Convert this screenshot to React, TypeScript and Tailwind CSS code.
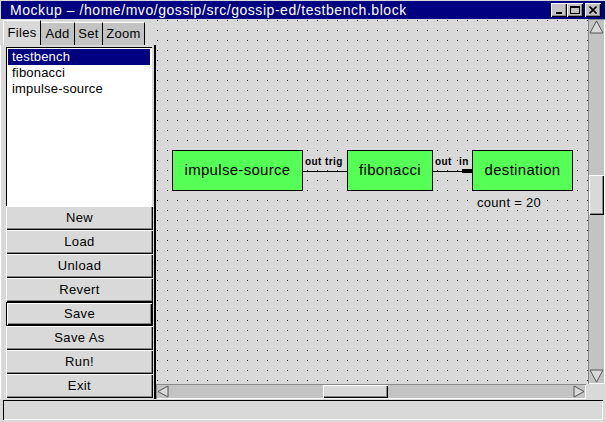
import React from "react";

const raised = "shadow-[inset_1px_1px_0_#ffffff,inset_-1px_-1px_0_#000000,inset_-2px_-2px_0_#8a8a8a]";
const sunken = "shadow-[inset_1px_1px_0_#8a8a8a,inset_-1px_-1px_0_#ffffff]";

const buttons = ["New", "Load", "Unload", "Revert", "Save", "Save As", "Run!", "Exit"];

function Arrow({ dir }: { dir: "up" | "down" | "left" | "right" }) {
  const pts = {
    up: "7.5,1 14,13 1,13",
    down: "1,1 14,1 7.5,13",
    left: "1,6.5 11,1 11,12",
    right: "1,1 11,6.5 1,12",
  }[dir];
  const vertical = dir === "up" || dir === "down";
  return (
    <svg width={vertical ? 15 : 12} height={vertical ? 14 : 13} className="block shrink-0">
      <polygon points={pts} fill="#d9d9d9" stroke="#555" strokeWidth="1" />
    </svg>
  );
}

export default function App() {
  return (
    <div className="w-[606px] h-[422px] bg-[#d9d9d9] flex flex-col overflow-hidden font-['Liberation_Sans',Arial,sans-serif] text-black select-none">
      {/* Title bar */}
      <div className="mx-[1px] mt-[1px] h-[18px] bg-[#000080] flex items-center pl-[9px] pr-[4px]">
        <span className="text-white text-[14px] leading-none tracking-[0.55px] flex-1 whitespace-nowrap">
          Mockup – /home/mvo/gossip/src/gossip-ed/testbench.block
        </span>
        <div className="flex items-center">
          <div className={`w-[16px] h-[14px] bg-[#c3c3c3] ${raised} flex items-end justify-center pb-[3px]`}>
            <div className="w-[6px] h-[2px] bg-black" />
          </div>
          <div className={`w-[16px] h-[14px] bg-[#c3c3c3] ${raised} flex items-center justify-center`}>
            <div className="w-[10px] h-[8px] border border-black border-t-2" />
          </div>
          <div className={`ml-[2px] w-[16px] h-[14px] bg-[#c3c3c3] ${raised} flex items-center justify-center`}>
            <svg width="8" height="8"><path d="M0.5 0.5 L7.5 7.5 M7.5 0.5 L0.5 7.5" stroke="#000" strokeWidth="1.6" /></svg>
          </div>
        </div>
      </div>

      {/* Body */}
      <div className="flex h-[380px]">
        {/* Left panel */}
        <div className="w-[156px] flex flex-col">
          <div className="h-[26px] flex items-end pl-[3px] pt-[1px] text-[13px] tracking-[0.3px]">
            <div className="h-[25px] w-[38px] bg-[#d9d9d9] border-l border-t border-white border-r border-r-black flex items-center justify-center">Files</div>
            <div className="h-[23px] w-[34px] bg-[#c3c3c3] border-t border-white border-r border-r-black flex items-center justify-center">Add</div>
            <div className="h-[23px] w-[28px] bg-[#c3c3c3] border-t border-white border-r border-r-black flex items-center justify-center">Set</div>
            <div className="h-[23px] w-[42px] bg-[#c3c3c3] border-t border-white border-r border-r-black flex items-center justify-center">Zoom</div>
          </div>
          <div className="flex-1 flex flex-col pl-[3px] pr-[3px] pb-[1px] border-l border-white shadow-[inset_-2px_0_0_#000]">
            <div className="mt-[2px] h-[159px] bg-white ml-[2px] mr-[1px] p-[2px] shadow-[inset_1px_1px_0_#000,inset_-1px_-1px_0_#fff]">
              <div className="text-[13px] tracking-[0.2px] leading-[16px]">
                <div className="bg-[#000080] text-white pl-[4px]">testbench</div>
                <div className="pl-[4px]">fibonacci</div>
                <div className="pl-[4px]">impulse-source</div>
              </div>
            </div>
            <div className="flex flex-col">
              {buttons.map((b) => (
                <div
                  key={b}
                  className={`h-[24px] ml-[2px] flex items-center justify-center text-[13px] tracking-[0.4px] bg-[#d9d9d9] ${
                    b === "Save"
                      ? "shadow-[inset_0_0_0_1px_#000,inset_2px_2px_0_#fff,inset_-2px_-2px_0_#000,inset_-3px_-3px_0_#8a8a8a]"
                      : raised
                  }`}
                >
                  {b}
                </div>
              ))}
            </div>
          </div>
        </div>

        {/* Canvas area */}
        <div className="flex-1 flex flex-col">
          <div className="flex h-[365px]">
            <div className="relative w-[432px] h-full bg-[#d9d9d9] overflow-hidden">
              <svg className="absolute inset-0" width="432" height="365">
                <defs>
                  <pattern id="dots" x="1" y="1" width="10" height="10" patternUnits="userSpaceOnUse">
                    <rect width="1" height="1" fill="#000" />
                  </pattern>
                </defs>
                <rect width="432" height="365" fill="url(#dots)" />
                <line x1="147" y1="152.5" x2="191" y2="152.5" stroke="#000" strokeWidth="1" />
                <line x1="277" y1="152.5" x2="316" y2="152.5" stroke="#000" strokeWidth="1" />
                <rect x="306" y="150" width="10" height="4" fill="#000" />
              </svg>
              <div className="absolute left-[16px] top-[131px] w-[131px] h-[41px] bg-[#55ff55] border border-black flex items-center justify-center text-[15px] tracking-[0.3px]">
                impulse-source
              </div>
              <div className="absolute left-[191px] top-[131px] w-[86px] h-[41px] bg-[#55ff55] border border-black flex items-center justify-center text-[15px] tracking-[0.3px]">
                fibonacci
              </div>
              <div className="absolute left-[316px] top-[131px] w-[101px] h-[41px] bg-[#55ff55] border border-black flex items-center justify-center text-[15px] tracking-[0.3px]">
                destination
              </div>
              <div className="absolute left-[149px] top-[138px] text-[10px] leading-[10px] font-bold tracking-[0.4px] bg-[#d9d9d9]">out trig</div>
              <div className="absolute left-[279px] top-[138px] text-[10px] leading-[10px] font-bold tracking-[0.4px] bg-[#d9d9d9]">out</div>
              <div className="absolute left-[303px] top-[138px] text-[10px] leading-[10px] font-bold tracking-[0.4px]">in</div>
              <div className="absolute left-[320px] top-[177px] text-[13px] leading-[13px] tracking-[0.3px] bg-[#d9d9d9] px-[1px]">count = 20</div>
            </div>
            {/* vertical scrollbar */}
            <div className={`w-[17px] h-full bg-[#c3c3c3] ${sunken} flex flex-col items-center py-[1px]`}>
              <Arrow dir="up" />
              <div className="flex-1 w-full px-[1px] pt-[141px]">
                <div className={`h-[40px] bg-[#d9d9d9] ${raised}`} />
              </div>
              <Arrow dir="down" />
            </div>
            <div className="w-[1px]" />
          </div>
          <div className="flex h-[15px]">
            <div className={`w-[430px] h-full bg-[#c3c3c3] ${sunken} flex items-center px-[1px]`}>
              <Arrow dir="left" />
              <div className="flex-1 h-full py-[1px] pl-[154px]">
                <div className={`w-[65px] h-full bg-[#d9d9d9] ${raised}`} />
              </div>
              <Arrow dir="right" />
            </div>
          </div>
        </div>
      </div>

      {/* Status bar */}
      <div className="mx-[3px] mt-[1px] h-[20px] bg-[#d9d9d9] shadow-[inset_1px_1px_0_#000,inset_-1px_-1px_0_#fff]" />
    </div>
  );
}
